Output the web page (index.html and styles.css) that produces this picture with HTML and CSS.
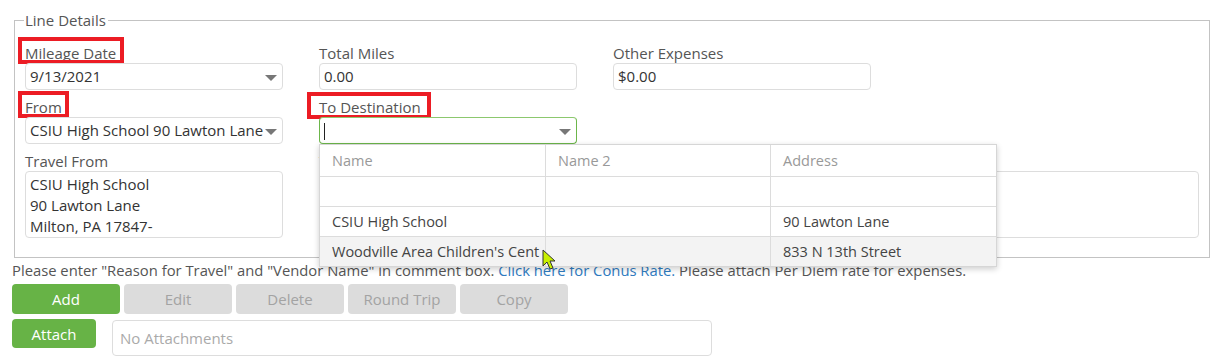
FILE: index.html
```html
<!DOCTYPE html>
<html lang="en">
<head>
    <meta charset="UTF-8">
    <meta name="viewport" content="width=device-width, initial-scale=1.0">
    <title>Mileage Line Details</title>
    <link rel="stylesheet" href="styles.css">
</head>
<body>
    <div class="page">
        <fieldset class="line-details">
            <legend>Line Details</legend>

            <div class="grid">
                <div class="field">
                    <label class="mark mark-date">Mileage Date</label>
                    <div class="select"><span>9/13/2021</span><i class="caret"></i></div>
                </div>
                <div class="field">
                    <label>Total Miles</label>
                    <div class="input">0.00</div>
                </div>
                <div class="field">
                    <label>Other Expenses</label>
                    <div class="input short">$0.00</div>
                </div>

                <div class="field">
                    <label class="mark mark-from">From</label>
                    <div class="select"><span>CSIU High School 90 Lawton Lane</span><i class="caret"></i></div>
                </div>
                <div class="field dest">
                    <label class="mark mark-dest">To Destination</label>
                    <div class="select-wrap">
                        <div class="select focused"><span class="text-cursor"></span><i class="caret"></i></div>

                        <div class="dropdown">
                            <div class="dd-row dd-head">
                                <div>Name</div><div>Name 2</div><div>Address</div>
                            </div>
                            <div class="dd-row">
                                <div></div><div></div><div></div>
                            </div>
                            <div class="dd-row">
                                <div>CSIU High School</div><div></div><div>90 Lawton Lane</div>
                            </div>
                            <div class="dd-row hover">
                                <div>Woodville Area Children's Cent</div><div></div><div>833 N 13th Street</div>
                            </div>
                            <svg class="pointer" width="16" height="22" viewBox="0 0 16 22">
                                <path d="M1 1 L1 17 L5 13 L8 20 L11 19 L8 12 L13 12 Z" fill="#c8f000" stroke="#333" stroke-width="1"/>
                            </svg>
                        </div>
                    </div>
                </div>
                <div class="field"></div>

                <div class="field">
                    <label>Travel From</label>
                    <div class="textarea">CSIU High School<br>90 Lawton Lane<br>Milton, PA 17847-</div>
                </div>
                <div class="field">
                    <label>Travel To</label>
                    <div class="textarea"></div>
                </div>
                <div class="field">
                    <label>Comments</label>
                    <div class="textarea"></div>
                </div>
            </div>
        </fieldset>

        <p class="note">Please enter "Reason for Travel" and "Vendor Name" in comment box. <a href="#">Click here for Conus Rate.</a> Please attach Per Diem rate for expenses.</p>

        <div class="actions">
            <button class="btn primary">Add</button>
            <button class="btn" disabled>Edit</button>
            <button class="btn" disabled>Delete</button>
            <button class="btn" disabled>Round Trip</button>
            <button class="btn" disabled>Copy</button>
        </div>

        <div class="attach-row">
            <button class="btn primary attach">Attach</button>
            <div class="attachments">No Attachments</div>
        </div>
    </div>
</body>
</html>
```

FILE: styles.css
```css
body {
    margin: 0;
    background: #fff;
    font-family: "Open Sans", "Noto Sans", Arial, sans-serif;
    font-size: 15px;
    color: #444;
}
.page {
    padding: 10px 15px 0 12px;
}
.line-details {
    margin: 0 0 0 2px;
    width: 1196px;
    box-sizing: border-box;
    border: 1px solid #c3c3c3;
    padding: 0 10px 19px 10px;
}
.line-details legend {
    padding: 0 2px 0 1px;
    margin-left: -1px;
    color: #555;
    line-height: 20px;
}
.grid {
    display: grid;
    grid-template-columns: 258px 258px 586px;
    column-gap: 36px;
    padding-top: 6px;
}
.field {
    position: relative;
}
.field label {
    display: inline-block;
    position: relative;
    margin-top: 7px;
    line-height: 20px;
    color: #555;
}
.mark::after {
    content: "";
    position: absolute;
    border: 4px solid #ec1c24;
}
.mark-date::after { left: -7px; right: -8px; top: -6px; bottom: -1px; }
.mark-from::after { left: -7px; right: -7px; top: -6px; bottom: -1px; }
.mark-dest::after { left: -12px; right: -10px; top: -5px; bottom: -2px; }
.input, .select, .textarea, .attachments {
    box-sizing: border-box;
    border: 1px solid #ddd;
    border-radius: 4px;
    background: #fff;
    color: #333;
}
.input, .select {
    height: 27px;
    line-height: 25px;
    padding: 0 4px;
}
.input.short {
    width: 258px;
}
.select-wrap {
    position: relative;
}
.select {
    position: relative;
    padding-right: 20px;
    white-space: nowrap;
    overflow: hidden;
}
.select.focused {
    border-color: #6cb64a;
    border-top-color: #8cc86e;
}
.caret {
    position: absolute;
    right: 5px;
    top: 11px;
    border-left: 6px solid transparent;
    border-right: 6px solid transparent;
    border-top: 6px solid #777;
}
.text-cursor {
    display: inline-block;
    width: 1px;
    height: 17px;
    margin-top: 5px;
    background: #222;
    vertical-align: top;
}
.textarea {
    height: 67px;
    padding: 2px 4px;
    line-height: 21px;
}
.dropdown {
    position: absolute;
    left: 0;
    top: 100%;
    width: 676px;
    background: #fff;
    border: 1px solid #d6d6d6;
    box-shadow: 0 2px 6px rgba(0, 0, 0, 0.2);
    font-size: 14.5px;
    z-index: 5;
}
.dd-row {
    display: grid;
    grid-template-columns: 225px 225px 1fr;
    box-sizing: border-box;
    height: 30px;
    border-top: 1px solid #dcdcdc;
}
.dd-row div {
    padding: 0 12px;
    line-height: 29px;
    color: #444;
    border-left: 1px solid #dcdcdc;
    white-space: nowrap;
    overflow: hidden;
}
.dd-row div:first-child {
    border-left: none;
}
.dd-head {
    border-top: none;
    height: 31px;
}
.dd-head div {
    color: #999;
    line-height: 31px;
}
.dd-row.hover {
    background: #f3f3f3;
}
.pointer {
    position: absolute;
    left: 222px;
    top: 104px;
}
.note {
    margin: 2px 0 0 0;
    line-height: 20px;
    font-size: 14.8px;
    color: #555;
}
.note a {
    color: #2f7bbf;
    text-decoration: none;
}
.actions {
    display: flex;
    gap: 4px;
    margin-top: 4px;
}
.btn {
    width: 108px;
    height: 30px;
    border: none;
    border-radius: 4px;
    font-family: inherit;
    font-size: 15px;
    background: #dcdcdc;
    color: #a3a3a3;
    padding: 0;
}
.btn.primary {
    background: #67b346;
    color: #fff;
}
.attach-row {
    display: flex;
    align-items: flex-start;
    gap: 16px;
    margin-top: 5px;
}
.btn.attach {
    width: 84px;
    height: 29px;
}
.attachments {
    width: 600px;
    height: 36px;
    margin-top: 1px;
    line-height: 34px;
    padding: 0 7px;
    color: #aaa;
}
```
